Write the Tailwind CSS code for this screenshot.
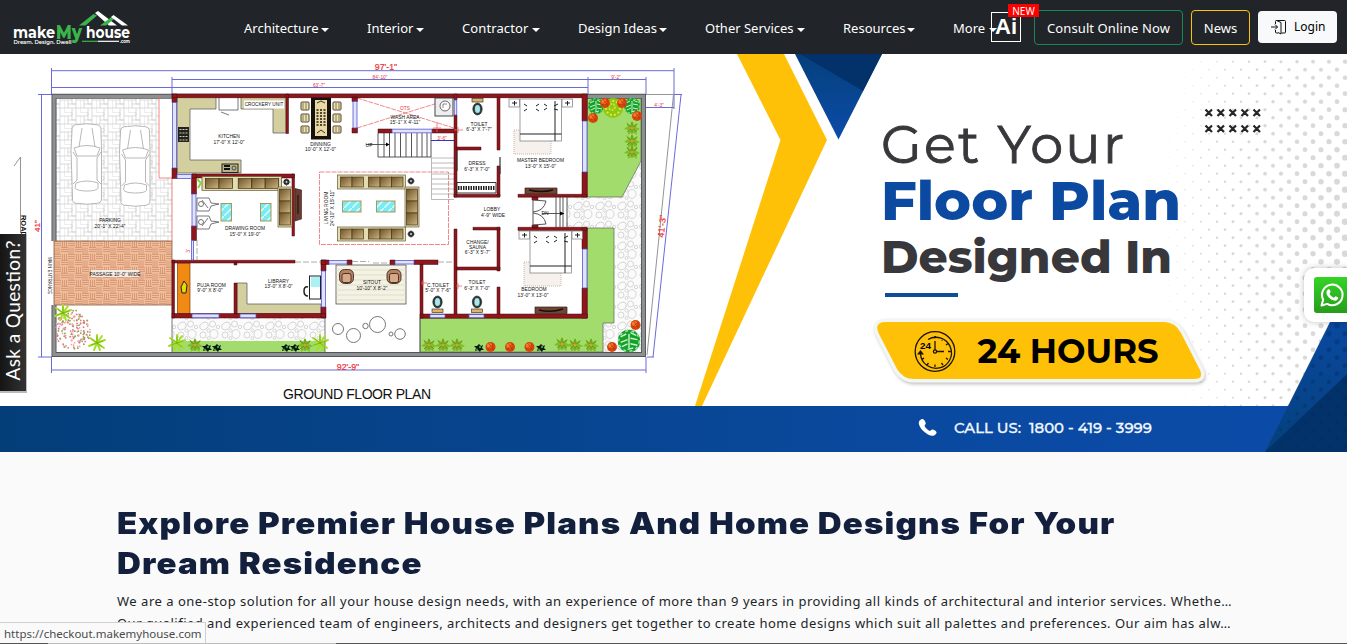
<!DOCTYPE html>
<html lang="en">
<head>
<meta charset="utf-8">
<title>makeMyhouse</title>
<script src="https://cdn.jsdelivr.net/npm/@tailwindcss/browser@4"></script>
</head>
<body class="h-[644px] overflow-hidden bg-[#fafafa] font-['Noto_Sans','Open_Sans',sans-serif] relative">
<header class="h-[54px] bg-[#212529] flex items-start text-white text-[13px] leading-[20px]">
  <svg class="ml-[13px] mt-[9px] w-[120px] h-[38px] shrink-0" viewBox="13 9 120 38">
    <path d="M79 25.500 93.500 14 97 15.500 85.500 25.500Z" fill="#3bb54a"/>
    <path d="M95 13 98 11 117 25.500H109Z" fill="#fff"/>
    <path d="M100 25.500 111.500 17 114 19 106 25.500Z" fill="#3bb54a"/>
    <path d="M111 17 113.500 15 128 25.500H122Z" fill="#fff"/>
    <g font-family="Montserrat, Lato, sans-serif" font-weight="700" fill="#fff">
      <text x="13" y="38" font-size="17" textLength="42" lengthAdjust="spacingAndGlyphs">make</text>
      <text x="56" y="38.500" font-size="19" font-weight="800" textLength="26" lengthAdjust="spacingAndGlyphs" fill="#3bb54a">My</text>
      <text x="86" y="38" font-size="17" textLength="44" lengthAdjust="spacingAndGlyphs">house</text>
      <text x="13.500" y="43.500" font-size="5.500" font-weight="600" textLength="58" lengthAdjust="spacingAndGlyphs">Dream. Design. Dwell</text>
      <text x="120" y="43" font-size="4.500" textLength="10" lengthAdjust="spacingAndGlyphs">.com</text>
    </g>
    <path d="M82 41.300H98" stroke="#3bb54a" stroke-width="1.200"/><path d="M98 41.300H119" stroke="#fff" stroke-width="1.200"/>
  </svg>
  <nav class="ml-[111px] mt-[18px] flex w-[747px] shrink-0 whitespace-nowrap">
    <a class="w-[123px] flex items-center gap-[3px]"><span class="w-[74px]">Architecture</span><i class="mt-[4px] border-x-4 border-t-4 border-x-transparent border-t-white"></i></a>
    <a class="w-[95px] flex items-center gap-[4px]"><span class="w-[45px]">Interior</span><i class="mt-[4px] border-x-4 border-t-4 border-x-transparent border-t-white"></i></a>
    <a class="w-[116px] flex items-center gap-[4px]"><span class="w-[66px] tracking-[0.1px]">Contractor</span><i class="mt-[4px] border-x-4 border-t-4 border-x-transparent border-t-white"></i></a>
    <a class="w-[127px] flex items-center gap-[3px]"><span class="w-[78px]">Design Ideas</span><i class="mt-[4px] border-x-4 border-t-4 border-x-transparent border-t-white"></i></a>
    <a class="w-[138px] flex items-center gap-[4px]"><span class="w-[88px]">Other Services</span><i class="mt-[4px] border-x-4 border-t-4 border-x-transparent border-t-white"></i></a>
    <a class="w-[110px] flex items-center gap-[3px]"><span class="w-[61px]">Resources</span><i class="mt-[4px] border-x-4 border-t-4 border-x-transparent border-t-white"></i></a>
    <a class="w-[38px] flex items-center gap-[4px]"><span class="w-[33px]">More</span><i class="mt-[4px] border-x-4 border-t-4 border-x-transparent border-t-white"></i></a>
  </nav>
  <a class="relative mt-[12px] w-[30px] h-[30px] shrink-0 border border-white flex items-center justify-center font-['Liberation_Sans',sans-serif] font-bold text-[22px] leading-none">Ai
    <b class="absolute left-[16px] -top-[9px] w-[31px] h-[13px] bg-[#ff0000] flex items-center justify-center font-normal text-[10px] font-['Noto_Sans',sans-serif]">NEW</b></a>
  <a class="ml-[13px] mt-[10px] w-[149px] h-[35px] shrink-0 rounded-[4px] border border-[#198754] flex items-center justify-center whitespace-nowrap tracking-[0.1px]">Consult Online Now</a>
  <a class="ml-[8px] mt-[10px] w-[59px] h-[35px] shrink-0 rounded-[4px] border border-[#ffc107] flex items-center justify-center">News</a>
  <a class="ml-[8px] mt-[11px] w-[79px] h-[32px] shrink-0 rounded-[4px] bg-[#f8f9fa] text-black flex items-center pl-[13px] gap-[8px] text-[12px]">
    <svg class="w-[15px] h-[16px]" viewBox="0 0 15 16" fill="none" stroke="#111" stroke-width="1"><path d="M0 8H6.500M4 5.500 6.500 8 4 10.500M4.500 5V2.500Q4.500 1.500 5.500 1.500H13.500Q14.500 1.500 14.500 2.500V13Q14.500 14 13.500 14H10.500M4.500 11V13Q4.500 14 5.500 14H7M5.500 1.500 10 3.500V15L7 13.500"/></svg>
    <span>Login</span></a>
</header>

<svg class="block w-[1347px] h-[398px] bg-white" viewBox="0 54 1347 398" font-family="Liberation Sans, sans-serif">
  <defs>
    <linearGradient id="bar"><stop offset="0" stop-color="#033e79"/><stop offset=".75" stop-color="#0b4aa3"/><stop offset="1" stop-color="#0b4ba8"/></linearGradient>
    <linearGradient id="tri" x2="0" y2="1"><stop offset="0" stop-color="#04407a"/><stop offset="1" stop-color="#0c4bab"/></linearGradient>
    <linearGradient id="tri2" x2="0" y2="1"><stop offset="0" stop-color="#0c4bab"/><stop offset="1" stop-color="#04407a"/></linearGradient>
    <linearGradient id="seat" x2="1" y2="1"><stop offset="0" stop-color="#6d5226"/><stop offset="1" stop-color="#cdb583"/></linearGradient>
    <pattern id="tile" width="16" height="16" patternUnits="userSpaceOnUse"><path d="M0 0H8V4H0M8 0V8H12V0M12 4H16M0 4V12H4V4M4 8H12M4 12H16M12 8V16M8 12V16M0 16V12" fill="none" stroke="#d2d2d2" stroke-width=".8"/></pattern>
    <pattern id="brick" x="54" y="241" width="14" height="13" patternUnits="userSpaceOnUse"><rect width="14" height="13" fill="#f0bd9c"/><path d="M0 .5H7M0 2.500H7M0 4.500H7M7 6.500H14M7 8.500H14M7 10.500H14M8.500 0V6.500M10.500 0V6.500M12.500 0V6.500M1 6.500V13M3 6.500V13M5 6.500V13" stroke="#cf8c66" stroke-width=".7"/></pattern>
    <pattern id="stone" width="22" height="20" patternUnits="userSpaceOnUse"><rect width="22" height="20" fill="#fbfbfb"/><g fill="none" stroke="#c6c6c6" stroke-width=".7"><ellipse cx="6" cy="6" rx="4.500" ry="3.500" transform="rotate(-25 6 6)"/><ellipse cx="16" cy="14" rx="4" ry="4.500"/><circle cx="14.500" cy="4" r="3"/><circle cx="5" cy="15" r="3"/><circle cx="20" cy="7" r="1.700"/><circle cx="10.500" cy="10.500" r="1.600"/><circle cx="10.500" cy="18" r="1.500"/></g></pattern>
    <pattern id="glass" width="8" height="8" patternUnits="userSpaceOnUse"><rect width="8" height="8" fill="#7beaf2"/><path d="M0 8 8 0" stroke="#d9ffff" stroke-width="1.500"/></pattern>
    <g id="car" fill="#fff" stroke="#b0b0b0" stroke-width=".9"><path d="M72 131Q71 124 79 124.500Q87 123 94 124.500Q102 124 101 131L101.500 150V198Q102 204 94 203.500Q87 205 80 203.500Q71 204 72.500 198L71 150Z"/><path d="M79 147 82 128M95 147 92 128M74 148Q87 143 100 148L97 156H77ZM76 183Q87 179 98 183V188Q97 191 87 191T75 188ZM73 152 77 158V180L73 184M101 152 97 158V180L101 184" fill="none"/></g>
    <g id="sofa"><rect width="68" height="14" fill="#e3dcb0" stroke="#655a35" stroke-width=".7"/><g fill="url(#seat)" stroke="#463718" stroke-width=".7"><rect x="3" y="2" width="11.500" height="10"/><rect x="14.500" y="2" width="11.500" height="10"/><rect x="31" y="2" width="11.500" height="10"/><rect x="42.500" y="2" width="11.500" height="10"/><rect x="54" y="2" width="11.500" height="10"/></g></g>
    <g id="sofav"><rect width="14" height="40" fill="#e3dcb0" stroke="#655a35" stroke-width=".7"/><g fill="url(#seat)" stroke="#463718" stroke-width=".7"><rect x="1.500" y="2" width="11" height="12"/><rect x="1.500" y="14" width="11" height="12"/><rect x="1.500" y="26" width="11" height="12"/></g></g>
    <g id="lamp"><circle r="3" fill="#222"/><path d="M-4 0H4M0-4V4" stroke="#555" stroke-width=".7"/><circle r="1" fill="#ccc"/></g>
    <g id="palm" stroke-linecap="round"><path d="M0 0 8-3M0 0 7 5M0 0 0-8M0 0-7-5M0 0-8 3M0 0-3 7M0 0 5-7M0 0 3 7" stroke="#a4df27" stroke-width="2"/><path d="M0 0 6-2M0 0 5 4M0 0 0-6M0 0-5-4M0 0-6 2" stroke="#72a71b" stroke-width=".7"/></g>
    <g id="bush"><path d="M0-7 2-3 6-5 4-1 8 1 4 3 5 7 0 4-4 7-4 2-8 1-4-2-6-6-2-3Z" fill="#84bb29"/><path d="M-5-4 5 4M5-4-5 4M0-6V6" stroke="#4f8d13" stroke-width=".8"/><circle r="1.500" fill="#e09a38"/></g>
    <g id="shrub"><path d="M0-4 2-2 4-3 3 0 5 2 2 2 1 4-1 2-4 3-3 0-5-2-2-2Z" fill="#111"/><circle cx="1" cy="-1" r="1.200" fill="#2fa544"/><circle cx="-2" cy="1.500" r="1" fill="#2fa544"/></g>
    <g id="bloom"><circle r="5" fill="#d8430d"/><circle cx="-1" cy="-1.500" r="2.600" fill="#fb7a28"/><path d="M-3 2 3-3M-2-4 3 3" stroke="#9d2c06" stroke-width=".6"/></g>
    <g id="tree"><circle r="8" fill="#17a12a"/><path d="M-6-3-2-5M-6 1-1-1M-5 4-1 2M1-6 5-4M1-2 6-1M1 2 6 3M-1 6 3 5M0-5V5" stroke="#c9f7cd" stroke-width="1"/><circle r="7.300" fill="none" stroke="#9fe9a6" stroke-width="1" stroke-dasharray="2 2.500"/></g>
    <g id="wc" stroke="#222" stroke-width=".6"><ellipse cx="0" cy="0" rx="4.700" ry="6" fill="#253a3c"/><ellipse rx="3" ry="4.300" fill="#a9e7e8"/><rect x="-5.500" y="7" width="11" height="3.500" fill="#e1b46a"/></g>
    <g id="bed" stroke="#222" stroke-width=".7" fill="#fff"><rect x="-11" y="0" width="10.500" height="8" stroke="#777"/><rect x="42" y="0" width="10.500" height="8" stroke="#777"/><rect width="41.500" height="42" stroke="#777"/><path d="M0 35H41.500M35 2V42M4 5 7 7M16 7 19 5M24 5 27 7M4 12 7 10M16 10 19 12M24 11 27 9M38 5 34 7M38 11 34 10M-8 4H-3M-5.500 2V6.500M45 4H50M47.500 2V6.500" stroke-width="1"/></g>
    <g id="arm" stroke="#2b1a12" stroke-width=".8"><rect x="-7" y="-7" width="14" height="14" rx="5" fill="#b98363"/><rect x="-4.500" y="-3" width="9" height="9" rx="2" fill="#d8a988"/></g>
  </defs>

  <g id="dots" fill="#d9d9d9"></g>

  <!-- dimension lines -->
  <g stroke="#6a6ad8" stroke-width="1" fill="none">
    <path d="M51.500 70.700H674M172 79.500H646M51.500 87.500H588M51.500 68V94M674 68V109M172 77V94M588 77V94M646 77V94M41.500 94V357M38 94.500H52M38 357H52M51.500 370H646M51.500 357V373M646 357V373M646 107.500H674M674 94.500H682M681 95 653 357M647 357H654"/>
  </g>
  <path d="M646 94.500H673.500L647 355M20.500 157V233M20.500 157 14 166" fill="none" stroke="#888" stroke-width=".9"/>

  <!-- plot surfaces -->
  <rect x="56" y="98" width="116" height="143" fill="url(#tile)"/>
  <path d="M159 98H172V178H159Z" fill="#fff"/>
  <rect x="54" y="241" width="118" height="64" fill="url(#brick)" stroke="#8b5a3d" stroke-width=".8"/>
  <rect x="172" y="318" width="153" height="23" fill="url(#stone)"/>
  <rect x="172" y="341" width="153" height="11" fill="#a1dc6c"/>
  <path d="M567 161H641V352H567Z" fill="url(#stone)"/>
  <path d="M587 98H641V161L622 197H587ZM587 228H614V323H603V352H420V318H587Z" fill="#a1dc6c" stroke="#666" stroke-width=".7"/>
  <path d="M172 305V352M325 318V352M420 318V352" stroke="#555" stroke-width=".8"/>
  <path d="M54 241V96.300H643.500V354.500H54V305" fill="none" stroke="#555" stroke-width="5"/>
  <path d="M54 241V96.300H643.500V354.500H54V305" fill="none" stroke="#8c9092" stroke-width="3.200"/>
  <use href="#car"/><use href="#car" x="48.500" y="2"/>

  <!-- rooms -->
  <path d="M177 98H454V133H378V260H177ZM456 98H582V194H456ZM500 230H582V314H500Z" fill="#fff"/>
  <g fill="none" stroke="#f06a6a" stroke-width=".8"><path d="M159 95V178H172V241"/><path d="M357 98 454 128M357 128 454 98M319.500 172H448.500V244.500H319.500Z" stroke-dasharray="5 1"/></g>
  <g fill="#d3cf9f" stroke="#666" stroke-width=".8">
    <path d="M177 97H216V109H190V160H241V173H177ZM241 97H286V133H273V109H241Z"/>
    <path d="M237 283H247V304H321V313.500H237Z"/>
  </g>
  <path d="M219 97H238V110H219ZM221 112 229 115" fill="#fff" stroke="#555" stroke-width=".8"/>
  <rect x="244" y="100.500" width="40" height="8" fill="#fff"/>
  <rect x="178" y="127" width="11" height="15" fill="#222"/><path d="M179.500 129.500H188M179.500 133H188M179.500 136.500H188M179.500 140H188" stroke="#d3cf9f" stroke-dasharray="2 1"/>
  <rect x="222" y="164" width="16" height="8.500" fill="#b9b28a" stroke="#222"/><path d="M224 166H230M224 169H230" stroke="#111" stroke-width="2"/><circle cx="234" cy="168" r="2" fill="none" stroke="#222" stroke-width=".7"/>
  <rect x="177.500" y="263" width="12.500" height="50.500" fill="#f08a12" stroke="#7a4108" stroke-width=".7"/>
  <path d="M184 281 187 285 186 293H182L181 287Z" fill="#e3dc0d" stroke="#222"/>
  <rect x="336" y="265" width="70" height="39" fill="#f4f3e3" stroke="#555" stroke-width=".8"/>
  <path d="M336 270H406M336 275H406M336 280H406M336 285H406M336 290H406M336 295H406M336 300H406" stroke="#d5d3c0" stroke-width=".7"/>
  <use href="#arm" x="346.500" y="276.500"/><use href="#arm" x="394" y="276.500"/>

  <!-- stairs -->
  <path d="M378 133V157H431M384 133V157M389.500 133V157M395 133V157M400.500 133V157M406 133V157M411.500 133V157M417 133V157M422 133V157M427 133V157M431 133V157M366 144.500H389" fill="none" stroke="#444" stroke-width=".9"/>
  <path d="M386 142.500 389.500 144.500 386 146.500Z"/>
  <path d="M431.500 140V199.500M431.500 158H454M431.500 163H454M431.500 168H454M431.500 174H454M431.500 179H454M431.500 184H454M431.500 189H454M431.500 194H454M431.500 199.500H454" stroke="#aaa" stroke-width=".8"/>
  <path d="M431 140.500H454" stroke="#3333c8"/>

  <!-- walls -->
  <g fill="#8e171d" stroke="#47090c" stroke-width=".5">
    <path d="M172 94H587V97.700H172ZM172 94H177V102.500H172ZM172 168H177V178.500H172ZM192 174H294.500V178H192ZM191.500 174H196.500V194H191.500ZM191.500 226H196.500V240.500H191.500ZM292 174H294.500V236H292ZM286 94H288.500V133.500H286ZM352 97H357.500V101.500H352ZM352 128H357.500V133H352ZM378 129H392V133H378ZM432 129H457V133H432Z"/>
    <path d="M454 94H457V100H454ZM454 115H457V197H454ZM454 229H457V316H454ZM497 97H500V150H497ZM456 147H481V150H456ZM497 166H500V196H497ZM454 194.300H500V197.200H454ZM518 194.300H587V197.200H518ZM582 94H587.300V121H582ZM582 172H587.300V197H582ZM532 197H538V200H532ZM532 225H538V228H532ZM473 227.300H500V230H473ZM518 227.300H587V230.500H518ZM497 227.300H500V271H497ZM497 287H500V318H497ZM456 267H500V270H456ZM582 228H587.300V249H582ZM582 288H587.300V318H582Z"/>
    <path d="M172 260.300H295V263H172ZM172 260H174.500V318H172ZM172 313.500H325.500V318H172ZM234 283H237V314H234ZM234 262H237V265H234ZM321 260H326V271H321ZM321 307H326V318H321ZM321 260H329V264.500H321ZM347 260H352V264.500H347ZM390 260H395V264.500H390ZM414 260H438V264.500H414ZM420 264H423V318H420ZM420 314H587.300V318.200H420Z"/>
  </g>
  <g fill="#dfe3fb" stroke="#5454cf" stroke-width=".8">
    <path d="M172.500 102.500H176.500V168H172.500ZM177 174.500H191.500V178.500H177ZM192 194H196V226H192ZM353 101.500H357V128H353ZM392 129.200H432V132.800H392ZM454.300 100H456.700V115H454.300ZM582.500 121H587V172H582.500ZM582.500 249H587V288H582.500ZM192 314H219V317.700H192ZM240 314H256V317.700H240ZM321.500 271H325.500V307H321.500ZM329 260.500H347V264H329ZM395 260.500H414V264H395ZM430 314.500H445V317.700H430ZM469 314.500H484V317.700H469ZM191.500 240.500H193.500V260H191.500Z"/>
  </g>
  <path d="M352 261.500H369M373 263H390M295 262H321M438 262H454M197 240V260" stroke="#888" stroke-width=".7" stroke-dasharray="6 2"/>

  <!-- furniture -->
  <g><rect x="311" y="97.500" width="20" height="42" fill="#17110c"/><rect x="315" y="100" width="12" height="36" fill="#ead9a4"/><path d="M316.500 110H326M316.500 113H326M316.500 116H326M316.500 119H326M316.500 122H326M316.500 125H326" stroke="#1c150f" stroke-width="1.500" stroke-dasharray="2 1.500"/>
    <path d="M317 103 321 101 325 103M317 133 321 130 325 133" stroke="#333" fill="none"/>
    <g fill="#ece2ba" stroke="#3c3117" stroke-width=".9"><rect x="301" y="102" width="8" height="8" rx="1"/><rect x="301" y="114" width="8" height="8" rx="1"/><rect x="301" y="126" width="8" height="7" rx="1"/><rect x="333" y="102" width="8" height="8" rx="1"/><rect x="333" y="114" width="8" height="8" rx="1"/><rect x="333" y="126" width="8" height="7" rx="1"/></g>
    <path d="M303 103V109M306 103V109M303 115V121M306 115V121M303 127V132M306 127V132M336 103V109M339 103V109M336 115V121M339 115V121M336 127V132M339 127V132" stroke="#8d7a41"/></g>
  <use href="#sofa" transform="translate(202 176.500) scale(1.170 1)"/><use href="#sofav" x="278" y="187"/>
  <path d="M197 179 201 183 198 188" stroke="#8bd33d" stroke-width="2" fill="none"/>
  <g fill="#fff" stroke="#555" stroke-width=".8"><path d="M197 198H209L211 203 219 204 211 206 209 211H197ZM197 216H209L211 221 219 222 211 224 209 229H197Z"/><circle cx="201" cy="204" r="2.500"/><circle cx="201" cy="222" r="2.500"/><path d="M202 200 208 208M202 226 208 218"/></g>
  <g fill="url(#glass)" stroke="#a99755"><rect x="221" y="203.500" width="10.500" height="17.500"/><rect x="260.500" y="203.500" width="10.500" height="17.500"/><rect x="342.500" y="201" width="18.500" height="11"/><rect x="376.500" y="201" width="18.500" height="11"/></g>
  <path d="M295 188.500 301.500 190V219L295 221Z" fill="#6e3b2c" stroke="#222" stroke-width=".6"/><path d="M298 195V214" stroke="#222" stroke-width="1.400"/>
  <use href="#sofa" x="337.500" y="175"/><use href="#sofa" x="337.500" y="227"/><use href="#sofav" x="405" y="187"/>
  <use href="#lamp" x="286.500" y="182"/><use href="#lamp" x="411" y="181"/><use href="#lamp" x="411" y="234"/>
  <rect x="435" y="98" width="18" height="18" fill="#eee" stroke="#333" stroke-width=".9"/><circle cx="445" cy="106" r="5" fill="#fff" stroke="#444" stroke-width=".8"/><path d="M443 108V104H447" fill="none" stroke="#555" stroke-width=".7"/>
  <rect x="309.500" y="276" width="11" height="23" fill="#fff" stroke="#222"/><rect x="311" y="277" width="9" height="10" fill="#a9f1f2"/><path d="M308 287Q304 286 304 291T308 296" fill="none" stroke="#222" stroke-width="1.500"/>
  <use href="#wc" transform="translate(477.500 109) scale(1 -1)"/><use href="#wc" x="477" y="302"/><use href="#wc" x="437.500" y="302"/>
  <g fill="#f6f1ec" stroke="#bda58f" stroke-width=".8" stroke-dasharray="1 1"><path d="M514 130H551V154H514ZM524 262H561V286H524Z"/></g>
  <use href="#bed" x="520" y="99"/><use href="#bed" x="530" y="231"/>
  <path d="M525 188H557V194H525ZM535 307H567V313.500H535Z" fill="#77432f" stroke="#222" stroke-width=".7"/><path d="M529 190Q541 193 553 190M539 310Q551 313 563 309" fill="none" stroke="#111" stroke-width="1.500"/>
  <path d="M457 182.500H496V193H457Z" fill="#fff" stroke="#222" stroke-width=".9"/><path d="M458 188H495" stroke="#222" stroke-width="4" stroke-dasharray="1.500 1"/>
  <path d="M500 157V174M457 150V171" stroke="#333" stroke-width="1.200"/>
  <path d="M533 200V225M533 200 546 201Q544 211 533 212M533 225 546 224Q544 214 533 213M556 197V227M560 197V227M563 197V227M567 197V227M542 213.500H562" fill="none" stroke="#444" stroke-width=".9"/><path d="M560 211.500 564.500 213.500 560 215.500Z"/>
  <g fill="none" stroke="#666" stroke-width=".9"><circle cx="338" cy="329" r="5.500"/><circle cx="353.500" cy="335.500" r="7"/><circle cx="365.500" cy="326" r="2.700"/><circle cx="377.500" cy="324.500" r="8"/><circle cx="391" cy="334" r="2"/><circle cx="400" cy="334" r="5.300"/></g>

  <!-- planting -->
  <g id="blossom"></g>
  <use href="#palm" x="63" y="313"/><use href="#palm" x="97" y="343"/><use href="#palm" x="177" y="343"/><use href="#bush" x="195" y="345"/><use href="#palm" x="320" y="343"/><use href="#bush" x="305" y="345"/>
  <use href="#shrub" x="207" y="348"/><use href="#shrub" x="217" y="348"/><use href="#shrub" x="286" y="348"/><use href="#shrub" x="295" y="348"/>
  <use href="#bush" x="429" y="345"/><use href="#bush" x="443" y="345"/><use href="#bush" x="457" y="345"/><use href="#shrub" x="479" y="348"/><use href="#bloom" x="490.500" y="347"/><use href="#bloom" x="510" y="347"/><use href="#bloom" x="529.500" y="347"/><use href="#shrub" x="541" y="348"/><use href="#bush" x="562" y="344"/><use href="#bush" x="575" y="345"/><use href="#bush" x="591" y="345"/><use href="#bloom" x="612" y="347"/><use href="#bloom" x="635.500" y="325"/>
  <g transform="translate(629 341) scale(1.400)"><use href="#tree"/></g>
  <use href="#tree" x="596" y="106"/><use href="#tree" x="632" y="106"/><circle cx="613" cy="108" r="10" fill="#8fc814"/><circle cx="613" cy="108" r="7" fill="none" stroke="#d9e63a" stroke-width="2" stroke-dasharray="2 2"/><circle cx="612" cy="107" r="3" fill="none" stroke="#c7df2e" stroke-width="2" stroke-dasharray="2 1"/>
  <g><use href="#bloom" x="605" y="103"/><use href="#bloom" x="622" y="103"/><use href="#bloom" x="593" y="118"/><use href="#bloom" x="637" y="116"/></g>
  <use href="#bush" x="632" y="128"/><use href="#bush" x="632" y="141"/><use href="#bush" x="632" y="152"/>

  <!-- plan labels -->
  <g font-size="4.900" fill="#111" text-anchor="middle">
    <text x="110" y="222">PARKING</text><text x="110" y="228">20'-1" X 22'-4"</text>
    <rect x="91" y="270" width="48" height="7" fill="#f5ece6"/><text x="115" y="275.500">PASSAGE 10'-0" WIDE</text>
    <text x="229" y="138">KITCHEN</text><text x="229" y="143.500">17'-0" X 12'-0"</text>
    <text x="264" y="106.300" font-size="4.700">CROCKERY UNIT</text>
    <text x="320.500" y="146">DINNING</text><text x="320.500" y="151">10'-0" X 12'-0"</text>
    <text x="405" y="119">WASH AREA</text><text x="405" y="124">15'-1" X 4'-11"</text>
    <text x="369" y="146.500">UP</text>
    <text x="245" y="230">DRAWING ROOM</text><text x="245" y="235.500">15'-0" X 19'-0"</text>
    <text transform="translate(328 208) rotate(-90)">LIVING ROOM</text><text transform="translate(334 208) rotate(-90)">24'-10" X 15'-11"</text>
    <text x="479" y="125.500">TOILET</text><text x="479" y="130.500">6'-3" X 7'-7"</text>
    <text x="477" y="165">DRESS</text><text x="477" y="170.500">6'-3" X 7'-0"</text>
    <text x="540.500" y="162">MASTER BEDROOM</text><text x="540.500" y="168">13'-0" X 15'-0"</text>
    <text x="492" y="211">LOBBY</text><text x="493" y="216.500">4'-9" WIDE</text><text x="545" y="215">DN</text>
    <text x="477.500" y="243.500">CHANGE/</text><text x="477.500" y="248.500">SAUNA</text><text x="477.500" y="254">6'-3" X 5'-7"</text>
    <text x="477" y="284">TOILET</text><text x="477" y="289.500">6'-3" X 7'-0"</text>
    <text x="534" y="291">BEDROOM</text><text x="533" y="296.500">13'-0" X 13'-0"</text>
    <text x="211.500" y="286.500">PUJA ROOM</text><text x="210" y="292">9'-0" X 8'-0"</text>
    <text x="278.500" y="282.500">LIBRARY</text><text x="278.500" y="288">13'-0" X 8'-0"</text>
    <text x="372" y="284">SITOUT</text><text x="372" y="289.500">10'-10" X 8'-2"</text>
    <text x="438" y="286.500">C.TOILET</text><text x="438" y="292">5'-0" X 7'-6"</text>
    <text transform="translate(47.500 275.500) rotate(90)" font-size="4.500">MAIN ENTRANCE</text>
    <text transform="translate(20.500 226) rotate(90)" font-size="7.500" font-weight="700">ROAD</text>
  </g>
  <g fill="#ee3037" text-anchor="middle" font-size="4.800">
    <text x="386" y="70" font-size="8.800" stroke="#ee3037" stroke-width=".2">97'-1"</text><text x="380" y="78.500">84'-10"</text><text x="319" y="87">63'-7"</text><text x="616" y="78.500">9'-2"</text><text x="659" y="106.500">4'-3"</text><text x="442" y="140">3'-6"</text><text x="405" y="110">OTS</text>
    <g stroke="#ee3037" stroke-width=".2"><text x="348" y="369.500" font-size="8.800">92'-9"</text><text transform="translate(39.500 226) rotate(-90)" font-size="8">41"</text><text transform="translate(665 226.500) rotate(-84)" font-size="8.800">41'-3"</text></g><text transform="translate(190 251) rotate(-90)">3'</text>
  </g>
  <path d="M437 122V132M433 128H441M454 130H463M458 127V133M456 286H462M458 283V289M421 283H427M423 280V286" stroke="#e66" stroke-width=".8"/>
  <text x="283" y="399" font-size="14" fill="#111" textLength="148">GROUND FLOOR PLAN</text>

  <!-- promo artwork -->
  <path d="M737 54H784L827 140 702 406H695L780.500 140Z" fill="#ffc107"/>
  <path d="M795 54H882L838.500 139.500Z" fill="url(#tri)"/><path d="M800 54H882L863 91Z" fill="#03326a"/>
  <g font-family="Montserrat, Inter, sans-serif" fill="#38383c">
    <text x="881" y="163" font-size="52.500" textLength="243" stroke="#38383c" stroke-width=".9">Get Your</text>
    <text x="881" y="220" font-size="54.500" font-weight="800" fill="#0b4aa0" textLength="300" lengthAdjust="spacingAndGlyphs">Floor Plan</text>
    <text x="881" y="273" font-size="45" font-weight="800" textLength="291" lengthAdjust="spacingAndGlyphs">Designed In</text>
  </g>
  <rect x="885" y="293" width="73" height="4" fill="#114c98"/>
  <path d="M1205.500 109.500 1212 116M1212 109.500 1205.500 116M1217.500 109.500 1224 116M1224 109.500 1217.500 116M1229.500 109.500 1236 116M1236 109.500 1229.500 116M1241.500 109.500 1248 116M1248 109.500 1241.500 116M1253.500 109.500 1260 116M1260 109.500 1253.500 116M1205.500 125.500 1212 132M1212 125.500 1205.500 132M1217.500 125.500 1224 132M1224 125.500 1217.500 132M1229.500 125.500 1236 132M1236 125.500 1229.500 132M1241.500 125.500 1248 132M1248 125.500 1241.500 132M1253.500 125.500 1260 132M1260 125.500 1253.500 132" stroke="#26262a" stroke-width="2.200"/>
  <path d="M886 322H1164Q1175 322 1181 333L1200 370Q1204 379 1194 379H914Q903 379 897 369L879 334Q873 322 886 322Z" fill="#ffc107" stroke="#f2f7f5" stroke-width="7" paint-order="stroke" class="drop-shadow-[1px_2px_1.5px_rgba(0,0,0,0.22)]"/>
  <g fill="none" stroke="#1b1405" stroke-width="1.300"><circle cx="935" cy="351.500" r="19.800"/><path d="M928 339.500A15.500 15.500 0 1 1 920.500 354M935 341V350M937 351.500H944M935 336V338.500M950.500 351.500H948M935 367V364.500M943 338.500 941.500 340.500M948 343.500 946 345M948 359.500 946 358M943 365 941.500 363M927 365 928.500 363M922 359.500 924 358"/><circle cx="935" cy="351.500" r="1.600"/></g>
  <path d="M917 354.500 920.500 350 924 354.500Z" fill="#1b1405"/>
  <text x="920" y="349" font-size="9.500" font-weight="700" textLength="11" lengthAdjust="spacingAndGlyphs">24</text>
  <text x="977.500" y="362.800" font-family="Montserrat, Inter, sans-serif" font-size="34" font-weight="700" textLength="181" lengthAdjust="spacingAndGlyphs">24 HOURS</text>
  <rect y="406" width="1347" height="46" fill="url(#bar)"/>
  <path d="M1265 452 1347 288V452Z" fill="url(#tri2)"/><path d="M1265 452 1347 374V452Z" fill="#03326a"/>
  <g id="dots2" fill="#002a5c" opacity=".35"></g>
  <path d="M921 419.500C923 418.300 924.500 420 925.500 422.200 926.300 424 925 424.500 924.500 425.800 925.500 428.300 928 430.500 930 431 931.200 430.300 931.700 429 933.500 429.800 935.800 430.800 937.300 432 936.300 433.500 934.500 436.300 931.500 436.500 928 434.500 923 431.500 919.500 427.500 918.800 423.500 918.600 421.500 919.500 420.300 921 419.500Z" fill="#fff"/>
  <g font-family="Montserrat, Inter, sans-serif" font-size="14.500" font-weight="500" fill="#f2f8ff" stroke="#f2f8ff" stroke-width=".3"><text x="954" y="433.300" textLength="67" lengthAdjust="spacingAndGlyphs">CALL US:</text><text x="1029" y="433.300" textLength="123" lengthAdjust="spacingAndGlyphs">1800 - 419 - 3999</text></g>
</svg>

<main class="pl-[117px] pt-[51px]">
  <h1 class="font-['Inter',sans-serif] font-black text-[29.5px] leading-[40px] tracking-[1px] text-[#12203d] whitespace-nowrap"><span class="inline-block origin-left scale-x-[1.12]">Explore Premier House Plans And Home Designs For Your</span><br><span class="inline-block origin-left scale-x-[1.12]">Dream Residence</span></h1>
  <div class="mt-[7px] text-[13px] leading-[22px] text-[#212529] whitespace-nowrap">
    <p class="tracking-[0.51px]">We are a one-stop solution for all your house design needs, with an experience of more than 9 years in providing all kinds of architectural and interior services. Whethe…</p>
    <p class="tracking-[0.47px]">Our qualified and experienced team of engineers, architects and designers get together to create home designs which suit all palettes and preferences. Our aim has alw…</p>
  </div>
</main>

<aside class="absolute left-0 top-[234px] w-[27px] h-[159px] bg-gradient-to-r from-[#151515] to-[#333] border-r border-b-2 border-[#bbb]">
  <svg class="w-[26px] h-[157px]" viewBox="0 0 26 157"><text transform="translate(20 146.500) rotate(-90)" font-family="Lato, sans-serif" font-size="19" fill="#fff" textLength="140">Ask a Question?</text></svg>
</aside>
<aside class="absolute right-0 top-[268px] w-[43px] h-[54px] rounded-l-[10px] bg-white shadow-[0_0_6px_rgba(0,0,0,0.25)] pl-[10px] pt-[9px]">
  <svg class="block w-[33px] h-[36px]" viewBox="0 0 33 36"><defs><linearGradient id="wa" x2="0" y2="1"><stop offset="0" stop-color="#35d425"/><stop offset="1" stop-color="#279c1d"/></linearGradient></defs><path d="M3 0H33V36H3Q0 36 0 33V3Q0 0 3 0Z" fill="url(#wa)"/><path d="M7.500 28.500 9.200 22.800A10.300 10.300 0 1 1 13.200 26.900Z" fill="none" stroke="#fff" stroke-width="2" stroke-linejoin="round"/><path d="M14.300 12.300C15.500 11.800 15.800 12.500 16.500 14.500 16.800 15.500 15.700 16 15.500 16.500 16.300 18.500 18 20 19.800 20.800 20.500 20.500 21 19.200 21.600 19.200L24.300 20.500C24.300 23 22 24 20 23.500 16 22.500 13.300 19.500 12.500 16.500 12.200 14.500 13.200 13 14.300 12.300Z" fill="#fff"/></svg>
</aside>
<div class="absolute inset-x-0 bottom-0 h-px bg-[#555]"><div class="ml-[48px] w-[288px] h-px bg-[#bbb]"></div></div>
<div class="absolute left-0 top-[622px] w-[206px] h-[21px] bg-[#fafafa] border-t border-r border-[#d0d0d0] pl-[4px] text-[11.5px] leading-[22px] text-[#4a4a4a]">https://checkout.makemyhouse.com</div>
<script>
  const ns = 'http://www.w3.org/2000/svg';
  function circle(id, x, y, r, fill) {
    const c = document.createElementNS(ns, 'circle');
    c.setAttribute('cx', x); c.setAttribute('cy', y); c.setAttribute('r', r);
    if (fill) c.setAttribute('fill', fill);
    document.getElementById(id).appendChild(c);
  }
  // halftone: dots swell toward the right edge
  for (let row = 0; row < 49; row++) for (let x = 1105 + (row % 2) * 8; x < 1350; x += 16) {
    const y = 61.700 + row * 8, r = 3.900 - 0.0155 * Math.hypot(1390 - x, (235 - y) * 0.6);
    if (r < 0.3) continue;
    if (y < 406) circle('dots', x, y, r);
    if (x > 1265 + (452 - y) / 2 + 2) circle('dots2', x, y, r);
  }
  // blossom tree in the front garden
  for (let i = 0; i < 150; i++) {
    const a = i * i * 1.7, d = Math.sqrt(i / 150) * 18;
    circle('blossom', 73 + Math.cos(a) * d, 330 + Math.sin(a) * d * 1.100, 0.9, ['#e5738b', '#f2a6a8', '#8da04a'][i % 3]);
  }
</script>
</body>
</html>
